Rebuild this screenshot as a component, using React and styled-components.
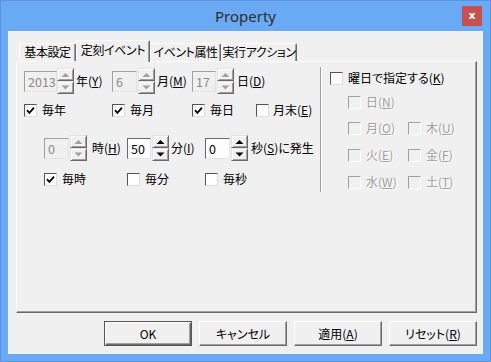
import React from 'react';
import styled, { createGlobalStyle } from 'styled-components';

const GlobalStyle = createGlobalStyle`
  html, body {
    margin: 0;
    padding: 0;
    background: #ffffff;
  }
  body {
    font-family: "Noto Sans CJK JP", "Noto Sans", sans-serif;
    font-size: 12px;
    font-feature-settings: "palt";
    color: #000;
  }
  * {
    box-sizing: border-box;
  }
`;

const Window = styled.div`
  width: 491px;
  height: 362px;
  display: flex;
  flex-direction: column;
  padding: 0 7px 7px;
  background: #6aa9f3;
  border: 1px solid #5b95de;
`;

const TitleBar = styled.div`
  height: 30px;
  display: grid;
  grid-template-columns: 1fr auto 1fr;
  align-items: center;
`;

const Title = styled.div`
  grid-column: 2;
  font-family: "Noto Sans", "Open Sans", sans-serif;
  font-size: 15px;
  color: #2e2e2e;
  font-feature-settings: normal;
`;

const CloseButton = styled.div`
  grid-column: 3;
  justify-self: end;
  margin-right: 1px;
  width: 20px;
  height: 20px;
  background: #c75050;
  color: #fff;
  font-family: "DejaVu Sans", sans-serif;
  font-weight: bold;
  font-size: 11px;
  line-height: 19px;
  text-align: center;
`;

const Client = styled.div`
  flex: 1;
  display: flex;
  flex-direction: column;
  background: #f0f0f0;
  padding: 9px 6px 8px 8px;
`;

const TabRow = styled.div`
  height: 21px;
  display: flex;
  align-items: flex-end;
  padding-left: 3px;
  position: relative;
  z-index: 1;
`;

const Tab = styled.div`
  width: ${({ w }) => w}px;
  height: ${({ active }) => (active ? 22 : 18)}px;
  margin-bottom: ${({ active }) => (active ? -1 : 0)}px;
  background: #f0f0f0;
  border-top: 1px solid #fff;
  border-left: 1px solid #fff;
  border-right: 1px solid #696969;
  box-shadow: inset -1px 0 #a0a0a0;
  border-radius: 2px 2px 0 0;
  text-align: center;
  letter-spacing: -0.4px;
  line-height: ${({ active }) => (active ? 18 : 16)}px;
  white-space: nowrap;
`;

const Panel = styled.div`
  flex: 1;
  border: 1px solid;
  border-color: #fff #696969 #696969 #fff;
  box-shadow: inset -1px -1px #a0a0a0;
  padding: 5px 8px 0 7px;
`;

const Top = styled.div`
  display: flex;
  align-items: stretch;
`;

const LeftSection = styled.div`
  width: 299px;
  display: flex;
  flex-direction: column;
`;

const Separator = styled.div`
  width: 2px;
  border-left: 1px solid #a0a0a0;
  border-right: 1px solid #fff;
`;

const RightSection = styled.div`
  padding-left: 8px;
  display: flex;
  flex-direction: column;
`;

const Row = styled.div`
  display: flex;
  align-items: center;
  height: ${({ h }) => h}px;
  margin-top: ${({ mt }) => mt || 0}px;
  padding-left: ${({ indent }) => indent || 0}px;
`;

const Cell = styled.div`
  display: flex;
  align-items: center;
  width: ${({ w }) => (w ? `${w}px` : 'auto')};
  flex: none;
`;

const Field = styled.div`
  width: ${({ w }) => w}px;
  height: 21px;
  border: 1px solid;
  border-color: ${({ disabled }) =>
    disabled ? '#a0a0a0 #e3e3e3 #e3e3e3 #a0a0a0' : '#696969 #e3e3e3 #e3e3e3 #696969'};
  background: ${({ disabled }) => (disabled ? '#f0f0f0' : '#fff')};
  color: ${({ disabled }) => (disabled ? '#8a8a8a' : '#000')};
  padding: 1px 0 0 3px;
  line-height: 17px;
  font-size: 12.5px;
`;

const Spin = styled.div`
  width: 17px;
  height: 26px;
  margin-left: ${({ ml }) => ml || 0}px;
  display: flex;
  flex-direction: column;
`;

const SpinButton = styled.div`
  flex: 1;
  display: flex;
  align-items: center;
  justify-content: center;
  background: #f0f0f0;
  border: 1px solid;
  border-color: #e3e3e3 #696969 #696969 #e3e3e3;
  box-shadow: inset 1px 1px #fff, inset -1px -1px #a0a0a0;
`;

const Label = styled.span`
  margin-left: ${({ ml }) => ml || 0}px;
  line-height: 16px;
  white-space: nowrap;
  color: ${({ disabled }) => (disabled ? '#a0a0a0' : '#000')};
  text-shadow: ${({ disabled }) => (disabled ? '1px 1px 0 #fff' : 'none')};
`;

const Key = styled.span`
  text-decoration: underline;
`;

const Box = styled.div`
  width: 13px;
  height: 13px;
  flex: none;
  border: 1px solid;
  border-color: ${({ disabled }) =>
    disabled ? '#a0a0a0 #fff #fff #a0a0a0' : '#555 #dcdcdc #dcdcdc #555'};
  background: ${({ disabled }) => (disabled ? '#f0f0f0' : '#fff')};
  display: flex;
  align-items: center;
  justify-content: center;
`;

const SubGrid = styled.div`
  display: grid;
  grid-template-columns: 60px 60px;
  padding-left: 18px;
`;

const ButtonRow = styled.div`
  display: flex;
  justify-content: flex-end;
  gap: 7px;
  margin-top: 8px;
`;

const Button = styled.div`
  width: 88px;
  height: 25px;
  display: flex;
  align-items: center;
  justify-content: center;
  background: #f0f0f0;
  border: 1px solid;
  border-color: ${({ primary }) => (primary ? '#555' : '#fff #696969 #696969 #fff')};
  box-shadow: ${({ primary }) =>
    primary
      ? 'inset 1px 1px #fff, inset -1px -1px #696969, inset -2px -2px #a0a0a0'
      : 'inset -1px -1px #a0a0a0'};
  line-height: 16px;
`;

const Arrow = ({ up, disabled }) => (
  <svg width="10" height="6" viewBox="0 0 10 6">
    {disabled && (
      <polygon
        points={up ? '2,6 6,2 10,6' : '2,1.5 10,1.5 6,5.5'}
        fill="#fff"
      />
    )}
    <polygon
      points={up ? '0.5,5 4.5,1 8.5,5' : '0.5,0.5 8.5,0.5 4.5,4.5'}
      fill={disabled ? '#a0a0a0' : '#000'}
    />
  </svg>
);

const SpinField = ({ value, w, disabled, spinGap, labelGap, children }) => (
  <>
    <Field w={w} disabled={disabled}>{value}</Field>
    <Spin ml={spinGap}>
      <SpinButton><Arrow up disabled={disabled} /></SpinButton>
      <SpinButton><Arrow disabled={disabled} /></SpinButton>
    </Spin>
    <Label ml={labelGap}>{children}</Label>
  </>
);

const Check = ({ checked, disabled, gap = 5, children }) => (
  <>
    <Box disabled={disabled}>
      {checked && (
        <svg width="9" height="9" viewBox="0 0 9 9">
          <path d="M1 4.2 L3.4 6.8 L8 1.6" stroke="#000" strokeWidth="1.8" fill="none" />
        </svg>
      )}
    </Box>
    <Label ml={gap} disabled={disabled}>{children}</Label>
  </>
);

const weekdays = [
  [{ t: '月', k: 'O' }, { t: '木', k: 'U' }],
  [{ t: '火', k: 'E' }, { t: '金', k: 'F' }],
  [{ t: '水', k: 'W' }, { t: '土', k: 'T' }],
];

const App = () => (
  <>
    <GlobalStyle />
    <Window>
      <TitleBar>
        <Title>Property</Title>
        <CloseButton>x</CloseButton>
      </TitleBar>
      <Client>
        <TabRow>
          <Tab w={57}>基本設定</Tab>
          <Tab w={74} active>定刻イベント</Tab>
          <Tab w={71}>イベント属性</Tab>
          <Tab w={76}>実行アクション</Tab>
        </TabRow>
        <Panel>
          <Top>
            <LeftSection>
              <Row h={28}>
                <Cell w={88}>
                  <SpinField value="2013" w={33} disabled labelGap={2}>
                    年(<Key>Y</Key>)
                  </SpinField>
                </Cell>
                <Cell w={80}>
                  <SpinField value="6" w={25} disabled spinGap={1} labelGap={2}>
                    月(<Key>M</Key>)
                  </SpinField>
                </Cell>
                <Cell>
                  <SpinField value="17" w={24} disabled spinGap={1} labelGap={3}>
                    日(<Key>D</Key>)
                  </SpinField>
                </Cell>
              </Row>
              <Row h={20} mt={5}>
                <Cell w={88}><Check checked>毎年</Check></Cell>
                <Cell w={80}><Check checked>毎月</Check></Cell>
                <Cell w={64}><Check checked>毎日</Check></Cell>
                <Cell><Check gap={4}>月末(<Key>E</Key>)</Check></Cell>
              </Row>
              <Row h={28} mt={14} indent={20}>
                <Cell w={83}>
                  <SpinField value="0" w={25} disabled spinGap={1} labelGap={5}>
                    時(<Key>H</Key>)
                  </SpinField>
                </Cell>
                <Cell w={78}>
                  <SpinField value="50" w={24} spinGap={1} labelGap={2}>
                    分(<Key>I</Key>)
                  </SpinField>
                </Cell>
                <Cell>
                  <SpinField value="0" w={25} spinGap={1} labelGap={3}>
                    秒(<Key>S</Key>)に発生
                  </SpinField>
                </Cell>
              </Row>
              <Row h={20} mt={7} indent={20}>
                <Cell w={83}><Check checked>毎時</Check></Cell>
                <Cell w={78}><Check>毎分</Check></Cell>
                <Cell><Check>毎秒</Check></Cell>
              </Row>
            </LeftSection>
            <Separator />
            <RightSection>
              <Row h={22}>
                <Check gap={5}>曜日で指定する(<Key>K</Key>)</Check>
              </Row>
              <SubGrid>
                <Row h={20} mt={3}>
                  <Check disabled>日(<Key>N</Key>)</Check>
                </Row>
              </SubGrid>
              {weekdays.map((pair, i) => (
                <SubGrid key={i}>
                  {pair.map((d) => (
                    <Row h={20} mt={i === 0 ? 6 : 7} key={d.k}>
                      <Check disabled>{d.t}(<Key>{d.k}</Key>)</Check>
                    </Row>
                  ))}
                </SubGrid>
              ))}
            </RightSection>
          </Top>
        </Panel>
        <ButtonRow>
          <Button primary>OK</Button>
          <Button>キャンセル</Button>
          <Button>適用(<Key>A</Key>)</Button>
          <Button>リセット(<Key>R</Key>)</Button>
        </ButtonRow>
      </Client>
    </Window>
  </>
);

export default App;
